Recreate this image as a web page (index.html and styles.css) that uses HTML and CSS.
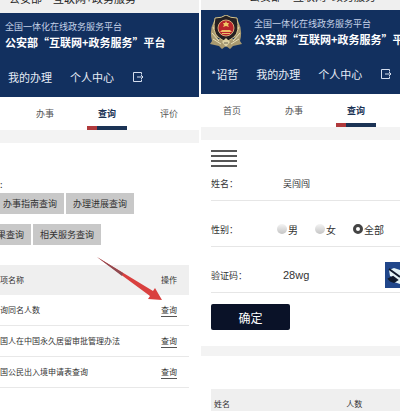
FILE: index.html
```html
<!DOCTYPE html>
<html lang="zh-CN">

<head>
    <meta charset="UTF-8">
    <meta name="viewport" content="width=device-width, initial-scale=1.0">
    <title>公安部“互联网+政务服务”平台</title>
    <link rel="stylesheet" href="styles.css">
</head>

<body>
    <div class="screens">
        <div class="screen list-screen">
            <div class="title-bar">
                <p>公安部“互联网+政务服务</p>
            </div>
            <header class="header">
                <div class="brand">
                    <div>
                        <p class="sub-title">全国一体化在线政务服务平台</p>
                        <h1>公安部“互联网+政务服务”平台</h1>
                    </div>
                </div>
                <nav class="user-nav">
                    <a href="#">我的办理</a>
                    <a href="#">个人中心</a>
                    <a href="#" aria-label="退出">
                        <svg width="12" height="12" viewBox="0 0 12 12" fill="none" stroke="#d5deee">
                            <path d="M9.5 3.500V1.500H1.500V10.500H9.500V8.500M5 6H11M9 4L11 6L9 8" />
                        </svg>
                    </a>
                </nav>
            </header>
            <nav class="tabs">
                <a href="#">办事</a>
                <a href="#" class="active">查询</a>
                <a href="#">评价</a>
            </nav>
            <div class="split"></div>

            <main class="list">
                <p class="list-label">:</p>
                <div class="btn-row">
                    <button>办事指南查询</button>
                    <button>办理进展查询</button>
                </div>
                <div class="btn-row second">
                    <button>果查询</button>
                    <button>相关服务查询</button>
                </div>
                <div class="table-wrap">
                    <table>
                        <thead>
                            <tr>
                                <th>项名称</th>
                                <th class="action">操作</th>
                            </tr>
                        </thead>
                        <tbody>
                            <tr>
                                <td>询同名人数</td>
                                <td class="action"><a href="#">查询</a></td>
                            </tr>
                            <tr>
                                <td>国人在中国永久居留审批管理办法</td>
                                <td class="action"><a href="#">查询</a></td>
                            </tr>
                            <tr>
                                <td>国公民出入境申请表查询</td>
                                <td class="action"><a href="#">查询</a></td>
                            </tr>
                        </tbody>
                    </table>
                    <svg class="arrow" width="66" height="44" viewBox="0 0 66 44">
                        <path d="M0 0L56 34L58 31L65 43L51 42L53 39Z" fill="#d9403f" />
                        <path d="M0 0L26 16L25 19Z" fill="#8f4a50" />
                    </svg>
                </div>
            </main>
        </div>

        <div class="screen form-screen">
            <div class="title-bar">
                <p>公安部“互联网+政务服务</p>
            </div>
            <header class="header">
                <div class="brand">
                    <svg class="emblem" width="32" height="34" viewBox="0 0 32 34">
                        <path d="M4 6Q-1 15 2 26L0 29L9 31L12 34L16 31L20 34L23 31L32 29L30 26Q33 15 28 6L24 24H8Z" fill="#a99a70" />
                        <path d="M3 12L8 22M2 18L9 26M3 24L11 29M29 12L24 22M30 18L23 26M29 24L21 29" stroke="#e8dfba" fill="none" />
                        <path d="M16 0Q20 3 27 3Q30 17 24 22Q20 25 16 27Q12 25 8 22Q2 17 5 3Q12 3 16 0Z" fill="#252022" stroke="#d8c68c" />
                        <circle cx="16" cy="13" r="8" fill="#b8242b" stroke="#d9a878" />
                        <path d="M16 6L17 8H19L18 10L19 12L16 11L13 12L14 10L13 8H15Z" fill="#f0c766" />
                        <path d="M10 17L12 15H20L22 17ZM12 18H20V19H12Z" fill="#edbe67" />
                        <path d="M12 27L16 23L20 27L16 32Z" fill="#ded2a4" />
                        <path d="M14 28H18" stroke="#6b6550" />
                    </svg>
                    <div>
                        <p class="sub-title">全国一体化在线政务服务平台</p>
                        <h1>公安部“互联网+政务服务”平台</h1>
                    </div>
                </div>
                <nav class="user-nav">
                    <a href="#">*诏哲</a>
                    <a href="#">我的办理</a>
                    <a href="#">个人中心</a>
                    <a href="#" aria-label="退出">
                        <svg width="12" height="12" viewBox="0 0 12 12" fill="none" stroke="#d5deee">
                            <path d="M9.500 3.500V1.500H1.500V10.500H9.500V8.500M5 6H11M9 4L11 6L9 8" />
                        </svg>
                    </a>
                </nav>
            </header>
            <nav class="tabs">
                <a href="#">首页</a>
                <a href="#">办事</a>
                <a href="#" class="active">查询</a>
            </nav>
            <div class="split"></div>

            <form class="query-form">
                <button type="button" class="menu" aria-label="菜单">
                    <i></i><i></i><i></i><i></i>
                </button>
                <div class="field name-field">
                    <label for="name">姓名：</label>
                    <input id="name" type="text" value="吴闯闯">
                </div>
                <div class="field" role="radiogroup" aria-label="性别">
                    <span class="field-label">性别：</span>
                    <div class="radios">
                        <label><input type="radio" name="sex">男</label>
                        <label><input type="radio" name="sex">女</label>
                        <label><input type="radio" name="sex" checked>全部</label>
                    </div>
                </div>
                <div class="field">
                    <label for="code">验证码：</label>
                    <input id="code" class="code" type="text" value="28wg">
                    <svg class="captcha" width="15" height="26" viewBox="0 0 15 26">
                        <path d="M0 0H15V26H0Z" fill="#20468a" />
                        <path d="M4 8L9 6L15 8V22L9 20L11 17L5 14Z" fill="#e3f2f5" />
                        <path d="M4 7L15 15M4 17L8 15L12 18L9 20L6 19Z" fill="#101a2c" stroke="#101a2c" stroke-width="2" />
                    </svg>
                </div>
                <button type="button" class="submit">确定</button>
            </form>
            <div class="split result-split"></div>
            <table class="result">
                <thead>
                    <tr>
                        <th>姓名</th>
                        <th>人数</th>
                    </tr>
                </thead>
            </table>
        </div>
    </div>
</body>

</html>
```
FILE: styles.css
```css
body {
    margin: 0;
    background: #fff;
    color: #333;
    font-family: "Noto Sans CJK SC", sans-serif;
    font-size: 9px;
}

h1,
p {
    margin: 0;
}

a {
    color: inherit;
    text-decoration: none;
}

button,
input {
    font-family: inherit;
    color: inherit;
    border: none;
    margin: 0;
    padding: 0;
}

.screens {
    display: grid;
    grid-template-columns: 1fr 1fr;
    gap: 2px;
    height: 100vh;
    overflow: hidden;
}

.screen {
    min-width: 0;
    overflow: hidden;
}

.title-bar {
    height: 13px;
    overflow: hidden;
    background: #efefef;
    color: #222;
    font-size: 11px;
    line-height: 16px;
    white-space: nowrap;
}

.title-bar p {
    margin-top: -10px;
    padding-left: 9px;
}

.form-screen .title-bar {
    height: 10px;
}

.form-screen .title-bar p {
    margin-top: -12px;
    padding-left: 48px;
}

/* 头部 */
.header {
    box-sizing: border-box;
    height: 84px;
    padding: 8px 0 0 5px;
    background: #12305f;
    color: #fff;
    white-space: nowrap;
}

.form-screen .header {
    padding-left: 9px;
}

.brand {
    display: flex;
    gap: 12px;
    height: 30px;
}

.emblem {
    flex: none;
    margin-top: -3px;
}

.sub-title {
    color: #c5d2e8;
    font-size: 9px;
    line-height: 12px;
}

.header h1 {
    font-size: 11px;
    line-height: 18px;
}

.user-nav {
    display: flex;
    align-items: center;
    gap: 18px;
    margin-top: 17px;
    padding-left: 3px;
    color: #e6ecf6;
    font-size: 11px;
    line-height: 18px;
}

.form-screen .user-nav {
    padding-left: 1px;
}

.user-nav svg {
    display: block;
}

/* 导航 */
.tabs {
    display: flex;
    height: 33px;
    padding-left: 14px;
    color: #555;
    line-height: 33px;
    text-align: center;
}

.form-screen .tabs {
    padding-left: 0;
}

.tabs a {
    flex: none;
    width: 62px;
}

.tabs .active {
    color: #1b3355;
    font-weight: bold;
    background: linear-gradient(to right, #b03a3c 10px, #1b3355 10px) center bottom / 40px 4px no-repeat;
}

.split {
    height: 13px;
    background: #f3f3f3;
}

/* 左侧列表 */
.list-label {
    padding-top: 34px;
    line-height: 16px;
}

.btn-row {
    display: flex;
    gap: 2px;
    margin-left: -4px;
}

.btn-row.second {
    margin: 10px 0 20px -10px;
}

.btn-row button {
    flex: none;
    height: 21px;
    padding: 0 7px;
    background: #c8c8c8;
    font-size: 9px;
    line-height: 21px;
}

.table-wrap {
    position: relative;
    margin-right: 10px;
}

table {
    width: 100%;
    border-collapse: collapse;
    font-size: 8px;
    line-height: 12px;
}

th {
    height: 30px;
    padding: 0;
    background: #efefef;
    font-weight: normal;
    text-align: left;
}

td {
    height: 30px;
    padding: 0;
    border-bottom: 1px solid #e8e8e8;
}

.action {
    width: 28px;
}

.action a {
    display: inline-block;
    border-bottom: 1px solid #555;
}

.arrow {
    position: absolute;
    top: -8px;
    left: 97px;
}

/* 右侧表单 */
.query-form {
    padding: 10px 0 16px 10px;
}

.menu {
    display: flex;
    flex-direction: column;
    gap: 3px;
    width: 26px;
    background: none;
}

.menu i {
    width: 100%;
    height: 2px;
    background: #555;
}

.field {
    display: flex;
    align-items: center;
    height: 34px;
    padding-top: 11px;
    border-bottom: 1px solid #e6e6e6;
}

.name-field {
    height: 33px;
    padding-top: 0;
}

.field > label,
.field-label {
    flex: none;
    width: 72px;
}

.field > input {
    flex: 1;
    min-width: 0;
    background: none;
    font-size: 9px;
}

.field > .code {
    font-family: "Liberation Sans", "Noto Sans CJK SC", sans-serif;
    font-size: 11px;
}

.radios {
    display: flex;
    gap: 17px;
    margin-left: -6px;
    font-size: 10px;
    white-space: nowrap;
}

.radios label {
    display: flex;
    align-items: center;
    gap: 1px;
}

.radios input {
    appearance: none;
    width: 10px;
    height: 10px;
    border-radius: 50%;
    background: linear-gradient(#f4f4f4, #c4c4c4);
}

.radios input:checked {
    box-sizing: border-box;
    border: 3px solid #444;
    background: #fff;
}

.captcha {
    flex: none;
}

.submit {
    width: 79px;
    height: 26px;
    margin-top: 11px;
    border-radius: 2px;
    background: #0a1228;
    color: #fff;
    font-size: 12px;
}

.result-split {
    height: 10px;
}

.result {
    width: auto;
    min-width: calc(100% - 10px);
    margin: 33px 0 0 10px;
}

.result th {
    width: 50%;
    padding-left: 3px;
}

.result th:first-child {
    width: 70%;
}
```
